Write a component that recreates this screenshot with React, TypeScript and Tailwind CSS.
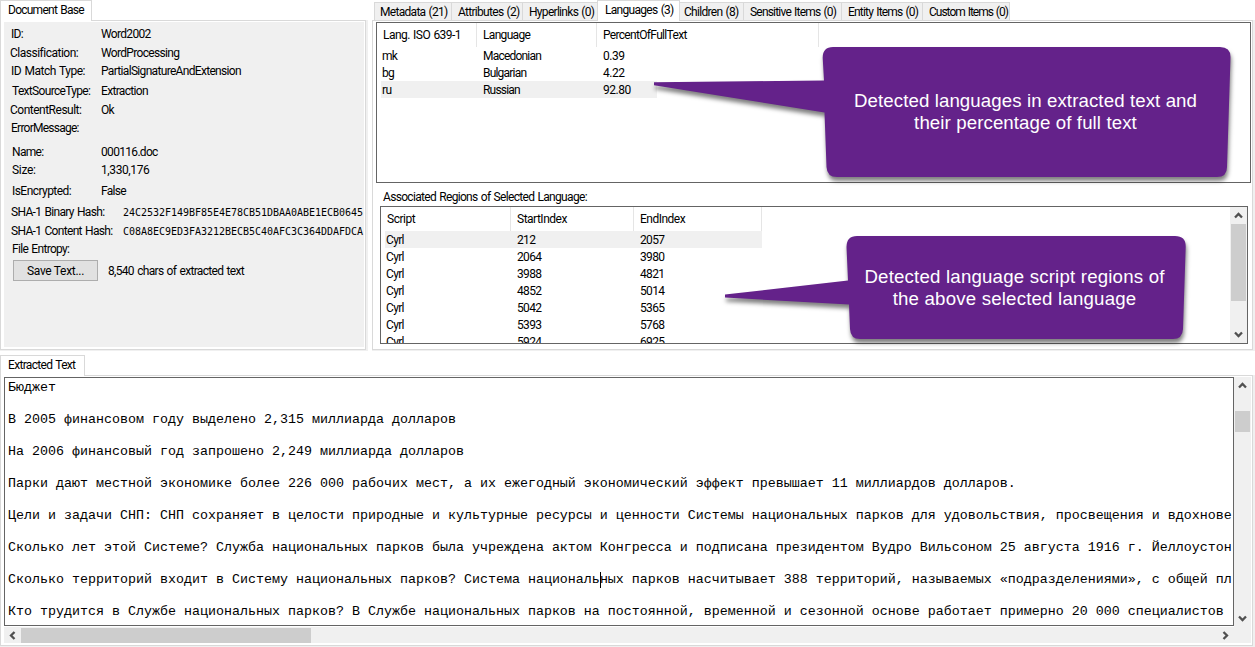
import React from "react";

type Field = { label: string; value?: string; hash?: boolean; row: string; labelClass: string; valueClass?: string };

const fields: Field[] = [
  { label: "ID:", value: "Word2002", row: "h-[16px]", labelClass: "pl-[7px]" },
  { label: "Classification:", value: "WordProcessing", row: "h-[19px]", labelClass: "pl-[6px] tracking-[-0.5px]" },
  { label: "ID Match Type:", value: "PartialSignatureAndExtension", row: "h-[18px]", labelClass: "pl-[7px] tracking-[-0.5px]" },
  { label: "TextSourceType:", value: "Extraction", row: "h-[20px]", labelClass: "pl-[8px]" },
  { label: "ContentResult:", value: "Ok", row: "h-[19px]", labelClass: "pl-[6px] tracking-[-0.5px]" },
  { label: "ErrorMessage:", row: "h-[18px]", labelClass: "pl-[7px] tracking-[-0.75px]" },
  { label: "Name:", value: "000116.doc", row: "h-[24px]", labelClass: "pl-[8px]" },
  { label: "Size:", value: "1,330,176", row: "h-[18px]", labelClass: "pl-[8px] tracking-[-0.3px]", valueClass: "tracking-[-0.4px]" },
  { label: "IsEncrypted:", value: "False", row: "h-[21px]", labelClass: "pl-[8px] tracking-[-0.55px]" },
  { label: "SHA-1 Binary Hash:", value: "24C2532F149BF85E4E78CB51DBAA0ABE1ECB0645", hash: true, row: "h-[21px]", labelClass: "pl-[7px]" },
  { label: "SHA-1 Content Hash:", value: "C08A8EC9ED3FA3212BECB5C40AFC3C364DDAFDCA", hash: true, row: "h-[19px]", labelClass: "pl-[7px]" },
  { label: "File Entropy:", row: "h-[18px]", labelClass: "pl-[8px]" },
];

const tabs = [
  { label: "Metadata (21)", cls: "w-[77px] pl-[5px] tracking-[-0.7px]" },
  { label: "Attributes (2)", cls: "w-[71px] pl-[6px] tracking-[-0.7px]" },
  { label: "Hyperlinks (0)", cls: "w-[75px] pl-[6px] tracking-[-0.7px]" },
  { label: "Languages (3)", cls: "w-[83px] pl-[7px] tracking-[-0.7px]", active: true },
  { label: "Children (8)", cls: "w-[63px] pl-[4px] tracking-[-0.7px]" },
  { label: "Sensitive Items (0)", cls: "w-[98px] pl-[6px] tracking-[-0.8px]" },
  { label: "Entity Items (0)", cls: "w-[81px] pl-[6px] tracking-[-0.8px]" },
  { label: "Custom Items (0)", cls: "w-[88px] pl-[6px] tracking-[-1px]" },
];

const languages = [
  ["mk", "Macedonian", "0.39"],
  ["bg", "Bulgarian", "4.22"],
  ["ru", "Russian", "92.80"],
];

const regions = [
  ["212", "2057"],
  ["2064", "3980"],
  ["3988", "4821"],
  ["4852", "5014"],
  ["5042", "5365"],
  ["5393", "5768"],
  ["5924", "6925"],
];

const paragraphs = [
  "Бюджет",
  "В 2005 финансовом году выделено 2,315 миллиарда долларов",
  "На 2006 финансовый год запрошено 2,249 миллиарда долларов",
  "Парки дают местной экономике более 226 000 рабочих мест, а их ежегодный экономический эффект превышает 11 миллиардов долларов.",
  "Цели и задачи СНП: СНП сохраняет в целости природные и культурные ресурсы и ценности Системы национальных парков для удовольствия, просвещения и вдохнове",
  "Сколько лет этой Системе? Служба национальных парков была учреждена актом Конгресса и подписана президентом Вудро Вильсоном 25 августа 1916 г. Йеллоустон",
  "Сколько территорий входит в Систему национальных парков? Система национальных парков насчитывает 388 территорий, называемых «подразделениями», с общей пл",
  "Кто трудится в Службе национальных парков? В Службе национальных парков на постоянной, временной и сезонной основе работает примерно 20 000 специалистов ",
];

const CARET_LINE = 6;
const CARET_COLUMN = 74;

function Chevron({ turn = "" }: { turn?: string }) {
  return (
    <svg width="9" height="9" viewBox="0 0 9 9" className={`block ${turn}`}>
      <path d="M1 6.500 4.500 3 8 6.500" fill="none" stroke="#505050" strokeWidth="2.300" />
    </svg>
  );
}

function DocumentBase() {
  return (
    <section className="flex w-[368px] flex-col">
      <div className="relative z-10 h-[21px] w-[92px] border border-b-0 border-[#d9d9d9] bg-white pl-[7px] leading-[18px] tracking-[-0.75px]">Document Base</div>
      <div className="-mt-px h-[331px] border-b border-r-2 border-[#f0f0f0]">
        <div className="flex h-[330px] flex-col border border-[#d9d9d9] bg-white pt-px pr-px pb-[2px] pl-[3px]">
          <div className="flex-1 overflow-hidden bg-[#f0f0f0] pt-[4px]">
            {fields.map((f) => (
              <div key={f.label} className={`flex items-end leading-[16px] ${f.row}`}>
                <span className={`shrink-0 whitespace-nowrap ${f.labelClass} ${f.hash ? "w-[119px]" : "w-[97px]"}`}>{f.label}</span>
                {f.hash ? (
                  <span className="-mb-px font-['DejaVu_Sans_Mono',monospace] text-[10px] tracking-[-0.02px]">{f.value}</span>
                ) : (
                  <span className={f.valueClass}>{f.value}</span>
                )}
              </div>
            ))}
            <div className="mt-[3px] flex items-center pl-[9px]">
              <button className="h-[21px] w-[85px] border border-[#adadad] bg-[#e1e1e1] leading-[20px] tracking-[-0.3px]">Save Text...</button>
              <span className="pl-[10px]">8,540 chars of extracted text</span>
            </div>
          </div>
        </div>
      </div>
    </section>
  );
}

function LanguagesPanel() {
  return (
    <section className="flex w-[883px] flex-col">
      <div className="relative z-10 flex h-[21px] items-end pl-[2px]">
        {tabs.map((t, i) =>
          t.active ? (
            <div key={t.label} className={`h-[21px] whitespace-nowrap border border-b-0 border-[#d9d9d9] bg-white leading-[18px] ${t.cls}`}>{t.label}</div>
          ) : (
            <div
              key={t.label}
              className={`h-[19px] whitespace-nowrap border-y border-[#d9d9d9] bg-[#f0f0f0] leading-[18px] ${i === 4 ? "" : "border-l"} ${i === 7 ? "border-r" : ""} ${t.cls}`}
            >
              {t.label}
            </div>
          ),
        )}
      </div>
      <div className="-mt-px h-[331px] border-b border-r-2 border-[#f0f0f0]">
        <div className="h-[330px] border border-[#d9d9d9] bg-white pt-px pl-[3px]">
          <div className="h-[161px] w-[875px] border border-[#646464]">
            <div className="flex h-[24px] leading-[25px]">
              <span className="w-[100px] border-r border-[#e5e5e5] pl-[6px] tracking-[-0.55px]">Lang. ISO 639-1</span>
              <span className="w-[120px] border-r border-[#e5e5e5] pl-[6px]">Language</span>
              <span className="w-[222px] border-r border-[#e5e5e5] pl-[6px]">PercentOfFullText</span>
            </div>
            {languages.map(([code, name, pct], i) => (
              <div key={code} className={`ml-[4px] flex h-[17px] w-[276px] leading-[18px] ${i === 2 ? "bg-[#f0f0f0]" : ""}`}>
                <span className="w-[100px] pl-px">{code}</span>
                <span className="w-[120px] pl-[2px] tracking-[-0.8px]">{name}</span>
                <span className="pl-[2px] tracking-[-0.45px]">{pct}</span>
              </div>
            ))}
          </div>
          <div className="h-[23px] pl-[7px] leading-[28px]">Associated Regions of Selected Language:</div>
          <div className="ml-[4px] flex h-[138px] w-[868px] overflow-hidden border border-[#646464]">
            <div className="flex-1">
              <div className="flex h-[24px] leading-[24px] tracking-[-0.5px]">
                <span className="w-[130px] border-r border-[#e5e5e5] pl-[6px]">Script</span>
                <span className="w-[123px] border-r border-[#e5e5e5] pl-[6px]">StartIndex</span>
                <span className="w-[128px] border-r border-[#e5e5e5] pl-[6px]">EndIndex</span>
              </div>
              {regions.map(([start, end], i) => (
                <div key={start} className={`ml-[4px] flex h-[17px] w-[377px] leading-[18px] tracking-[-0.65px] ${i === 0 ? "bg-[#f0f0f0]" : ""}`}>
                  <span className="w-[130px] pl-px">Cyrl</span>
                  <span className="w-[123px] pl-[2px]">{start}</span>
                  <span className="pl-[2px]">{end}</span>
                </div>
              ))}
            </div>
            <div className="flex w-[17px] flex-col items-center bg-[#f0f0f0]">
              <div className="flex h-[17px] items-center"><Chevron /></div>
              <div className="h-[77px] w-[15px] bg-[#cdcdcd]" />
              <div className="mt-auto flex h-[17px] items-center"><Chevron turn="rotate-180" /></div>
            </div>
          </div>
        </div>
      </div>
    </section>
  );
}

function ExtractedText() {
  return (
    <section className="mt-[4px] flex flex-col">
      <div className="relative z-10 h-[21px] w-[85px] border border-b-0 border-[#d9d9d9] bg-white pl-[7px] leading-[19px]">Extracted Text</div>
      <div className="-mt-px h-[272px] border-b border-r-2 border-[#f0f0f0]">
        <div className="h-[271px] border border-[#d9d9d9] bg-white pt-px pl-[3px]">
          <div className="flex w-[1247px]">
            <div className="h-[249px] w-[1230px] shrink-0 overflow-hidden border border-[#646464] pl-[3px] pt-[2px] font-['Liberation_Mono',monospace] text-[13.333px] tracking-normal [word-spacing:0px]">
              {paragraphs.map((p, i) => (
                <div key={i} className="mb-[16px] h-[16px] w-[1224px] overflow-hidden whitespace-pre leading-[16px]">
                  {i === CARET_LINE ? (
                    <>
                      {p.slice(0, CARET_COLUMN)}
                      <span className="-mr-px inline-block h-[16px] w-px bg-black align-top" />
                      {p.slice(CARET_COLUMN)}
                    </>
                  ) : (
                    p
                  )}
                </div>
              ))}
            </div>
            <div className="flex h-[250px] flex-1 flex-col items-center bg-[#f0f0f0]">
              <div className="flex h-[17px] items-center"><Chevron /></div>
              <div className="mt-[17px] h-[21px] w-[15px] bg-[#cdcdcd]" />
              <div className="mt-auto flex h-[17px] items-center"><Chevron turn="rotate-180" /></div>
            </div>
          </div>
          <div className="flex h-[16px] w-[1247px] items-center bg-[#f0f0f0]">
            <div className="flex w-[17px] justify-center"><Chevron turn="-rotate-90" /></div>
            <div className="h-[15px] w-[290px] bg-[#cdcdcd]" />
            <div className="mr-[17px] ml-auto flex w-[17px] justify-center"><Chevron turn="rotate-90" /></div>
          </div>
        </div>
      </div>
    </section>
  );
}

function Callouts() {
  return (
    <div className="font-['Liberation_Sans',sans-serif] text-[18.667px] leading-[22px] text-white [word-spacing:0px]">
      <svg className="pointer-events-none absolute inset-0 z-20" width="1255" height="647">
        <g fill="#64228a" className="drop-shadow-[1px_4px_2px_rgba(0,0,0,0.5)]">
          <path d="M833 47H1220Q1231 47 1230.5 58L1227 167Q1227 177 1217 177H837Q827 177 826.500 167L824.500 112.500 654 85.300V82.300L824 80.500 822.700 58Q822.500 47 833 47Z" />
          <path d="M857 236H1175Q1186 236 1185.700 247L1183 329Q1182.500 339 1173 339H860Q850.500 339 850 329L849 304.500 725 297.500V294.500L848 280.500 846.500 247Q846.500 236 857 236Z" />
        </g>
      </svg>
      <div className="absolute top-[47px] left-[825px] z-30 flex h-[130px] w-[401px] items-center justify-center text-center tracking-[0.1px]">
        <p>Detected languages in extracted text and<br />their percentage of full text</p>
      </div>
      <div className="absolute top-[236px] left-[848px] z-30 flex h-[103px] w-[333px] items-center justify-center text-center tracking-[0.19px]">
        <p>Detected language script regions of<br />the above selected language</p>
      </div>
    </div>
  );
}

export default function App() {
  return (
    <main className="relative h-[647px] w-[1255px] overflow-hidden bg-white font-[Roboto,sans-serif] text-[12px] tracking-[-0.68px] text-black [word-spacing:0.9px]">
      <div className="flex gap-[4px]">
        <DocumentBase />
        <LanguagesPanel />
      </div>
      <ExtractedText />
      <Callouts />
    </main>
  );
}
